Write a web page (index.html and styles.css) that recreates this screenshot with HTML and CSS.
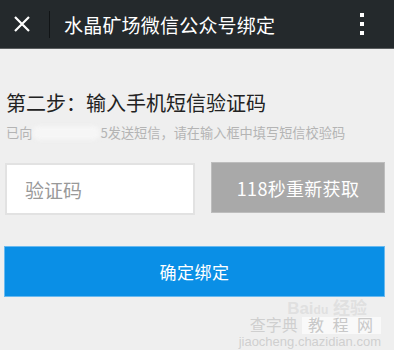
FILE: index.html
```html
<!DOCTYPE html>
<html lang="zh">
<head>
<meta charset="utf-8">
<link rel="stylesheet" href="styles.css">
</head>
<body>
<header class="topbar">
  <div class="close">
    <svg width="18" height="18" viewBox="0 0 18 18"><path d="M2 2 L16 16 M16 2 L2 16" stroke="#fff" stroke-width="2.2" fill="none"/></svg>
  </div>
  <div class="divider"></div>
  <div class="title">水晶矿场微信公众号绑定</div>
  <div class="more"><span></span><span></span><span></span></div>
</header>
<main class="content">
  <h1 class="step">第二步：输入手机短信验证码</h1>
  <p class="hint">已向<span class="blur"></span>5发送短信，请在输入框中填写短信校验码</p>
  <div class="row">
    <div class="input">验证码</div>
    <div class="resend">118秒重新获取</div>
  </div>
  <div class="confirm">确定绑定</div>
  <div class="wm">
    <div class="wm1">Bai<span class="paw">du</span> 经验</div>
    <div class="wm2">查字典 <span class="wm2b">教 程 网</span></div>
    <div class="wm3">jiaocheng.chazidian.com</div>
  </div>
</main>
</body>
</html>
```
FILE: styles.css
```css
* { box-sizing: border-box; margin: 0; padding: 0; }
html, body { width: 394px; height: 350px; overflow: hidden; }
body {
  background: #efefef;
  font-family: "Noto Sans CJK SC", "Noto Sans", sans-serif;
}
.topbar {
  height: 49px;
  background: #24292c;
  border-bottom: 1px solid #5a5d5f;
  display: flex;
  align-items: center;
}
.close {
  width: 49px;
  display: flex;
  justify-content: center;
  padding-right: 5px;
}
.close svg { display: block; }
.divider {
  width: 1px;
  height: 27px;
  background: #111416;
}
.title {
  flex: 1;
  color: #fff;
  font-size: 19px;
  padding-left: 14px;
  letter-spacing: 0.2px;
}
.more {
  width: 50px;
  display: flex;
  flex-direction: column;
  align-items: center;
  gap: 5px;
  padding-right: 14px;
}
.more span {
  width: 4px;
  height: 4px;
  background: #fff;
}
.content {
  padding: 40px 9px 0 5px;
  position: relative;
  height: 301px;
}
.step {
  font-size: 20px;
  font-weight: normal;
  color: #222;
  padding-left: 1px;
  line-height: 28px;
}
.hint {
  margin-top: 7px;
  font-size: 13.2px;
  color: #b4b4b4;
  padding-left: 1px;
  line-height: 18px;
  display: flex;
  align-items: center;
}
.blur {
  display: inline-block;
  width: 68px;
  height: 14px;
  background: #f6f6f6;
  border-radius: 7px;
  filter: blur(2px);
}
.row {
  display: flex;
  margin-top: 21px;
  gap: 16px;
}
.input {
  width: 190px;
  height: 52px;
  background: #fff;
  border: 2px solid #e2e2e2;
  color: #999;
  font-size: 19px;
  padding-left: 18px;
  display: flex;
  align-items: center;
}
.resend {
  flex: 1;
  height: 51px;
  margin-top: -1px;
  background: #a9a9a9;
  border: 1px solid #bdbdbd;
  color: #fff;
  font-size: 18px;
  display: flex;
  align-items: center;
  justify-content: center;
  letter-spacing: 0.3px;
}
.confirm {
  margin-top: 31px;
  margin-left: -1px;
  height: 51px;
  background: #0a8fe6;
  border: 1px solid #69b9ef;
  color: #fff;
  font-size: 17px;
  display: flex;
  align-items: center;
  justify-content: center;
  letter-spacing: 0.5px;
}
.wm {
  position: absolute;
  right: 13px;
  top: 251px;
  text-align: right;
  font-family: "Liberation Sans", "Noto Sans CJK SC", sans-serif;
  line-height: 1;
}
.wm1 { font-size: 17px; color: rgba(222,222,222,0.9); font-weight: bold; padding-right: 14px; }
.paw { font-size: 12px; }
.wm2 { font-size: 16px; color: rgba(205,205,205,0.95); margin-top: 1px; }
.wm2b { background: rgba(255,255,255,0.6); padding: 0 6px; color: #c8c8c8; letter-spacing: 2px; }
.wm3 { font-size: 13px; color: rgba(205,205,205,0.95); margin-top: 1px; }
```
